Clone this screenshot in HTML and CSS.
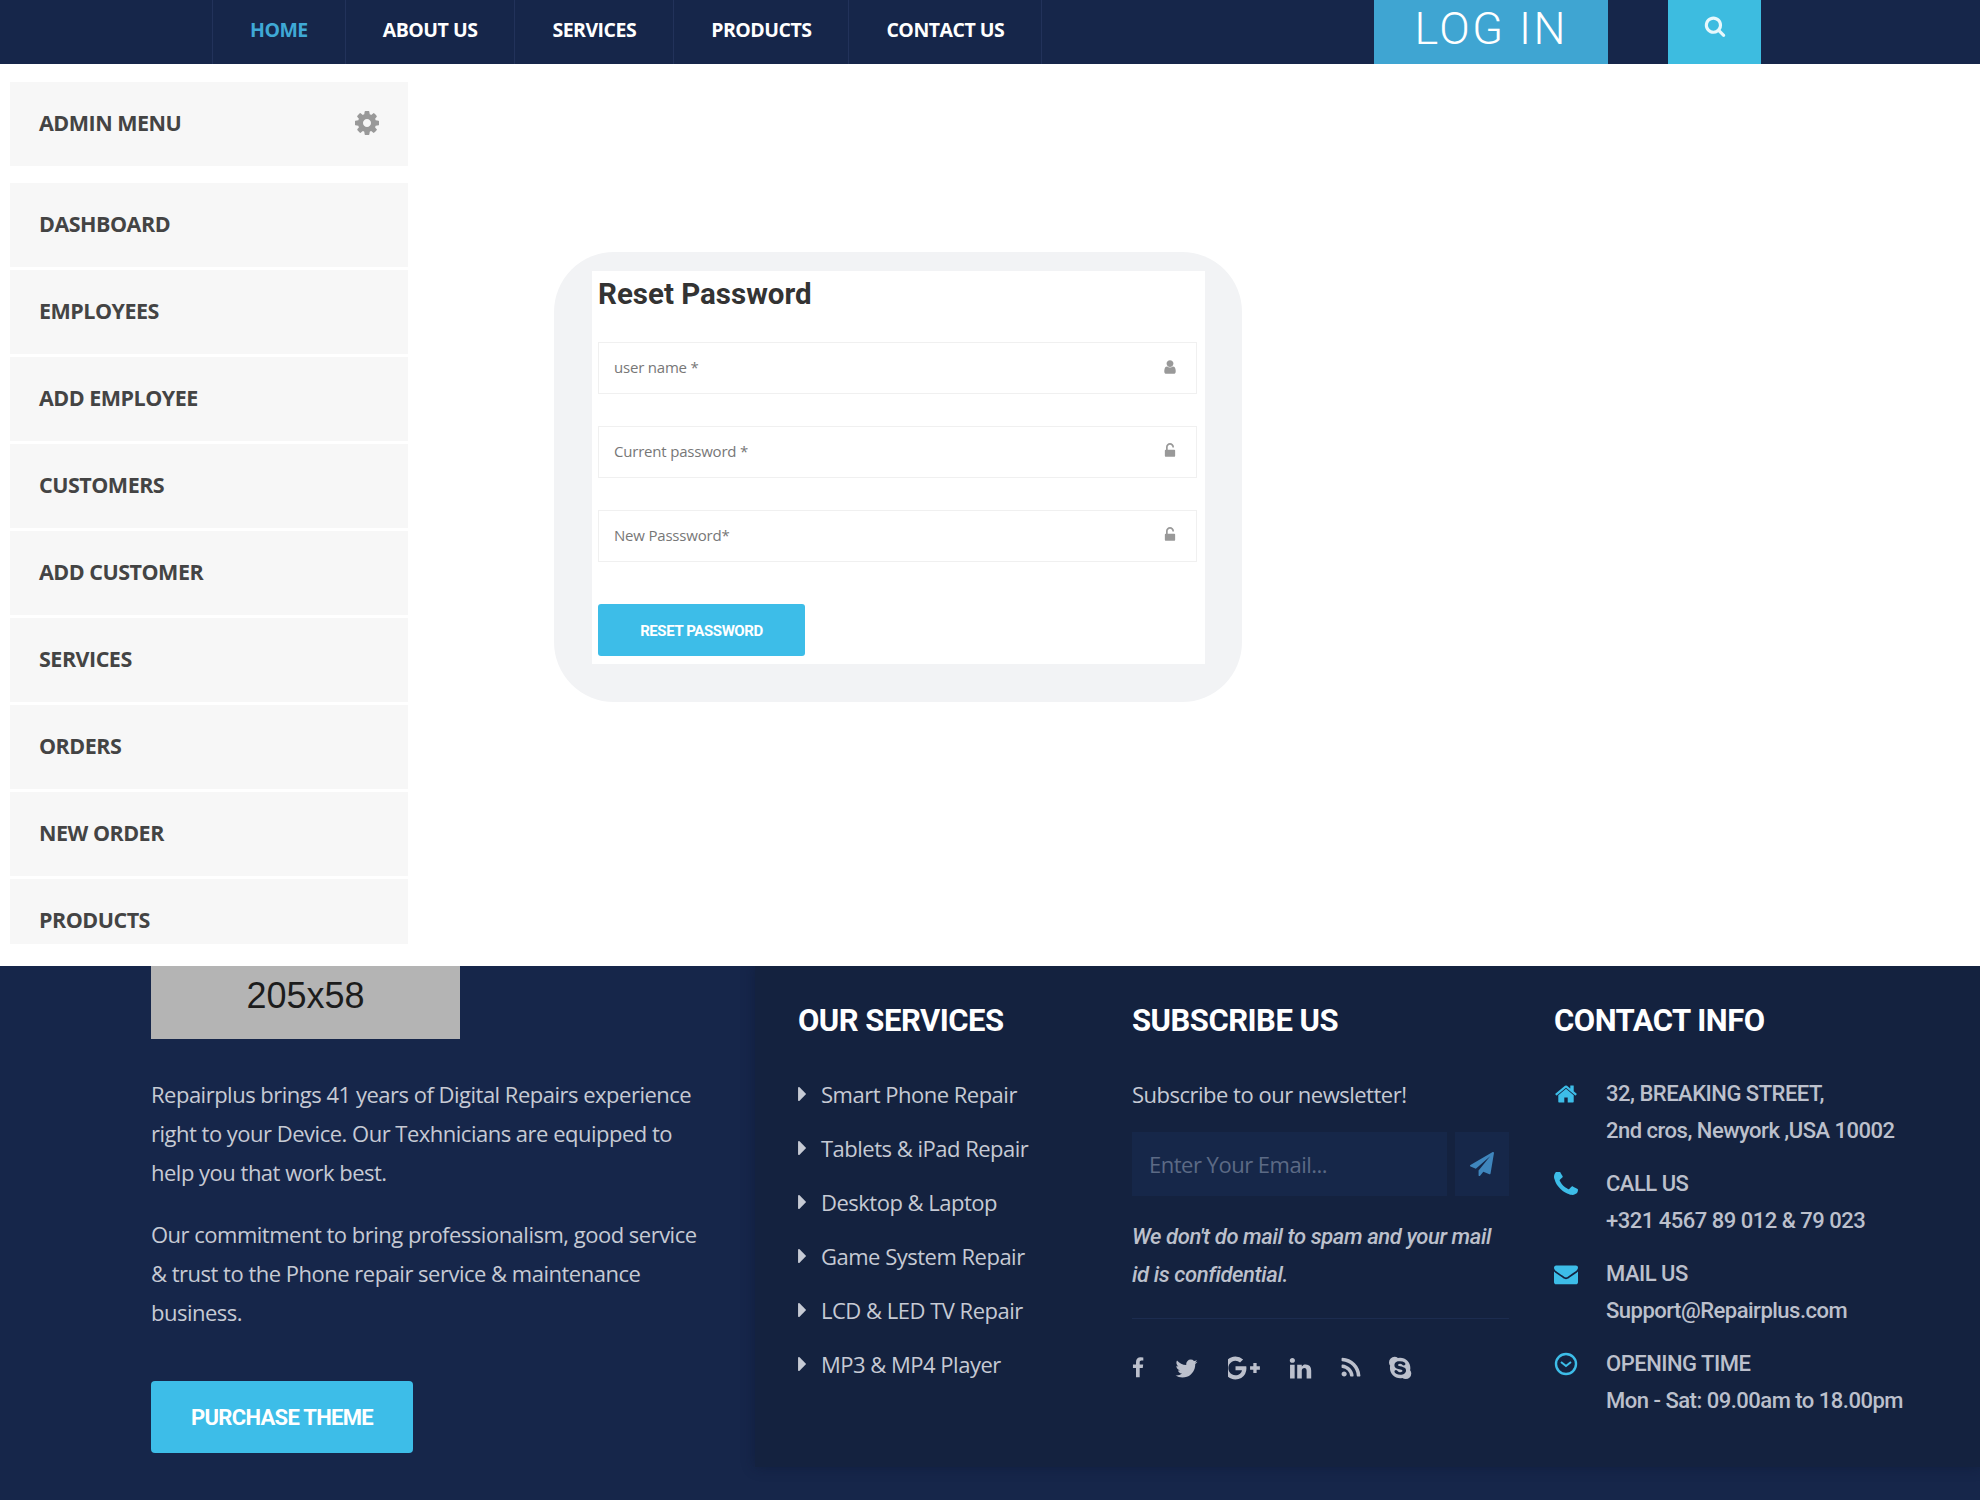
FILE: index.html
```html
<!DOCTYPE html>
<html lang="en">
<head>
  <meta charset="UTF-8" />
  <meta name="viewport" content="width=device-width, initial-scale=1.0"/>
  <title>Reset Password - Repairplus</title>
  <link rel="stylesheet" href="styles.css">
</head>
<body>
  <svg class="icon-defs" aria-hidden="true">
    <symbol id="i-search" viewBox="0 0 1792 1792"><path d="M1216 832q0-185-131.500-316.500t-316.500-131.500-316.500 131.500-131.500 316.500 131.500 316.500 316.500 131.500 316.500-131.500 131.500-316.500zm512 832q0 52-38 90t-90 38q-54 0-90-38l-343-342q-179 124-399 124-143 0-273.500-55.500t-225-150-150-225-55.500-273.500 55.500-273.500 150-225 225-150 273.500-55.500 273.500 55.500 225 150 150 225 55.500 273.500q0 220-124 399l343 343q37 37 37 90z"/></symbol>
    <symbol id="i-cog" viewBox="0 0 1792 1792"><path d="M1152 896q0-106-75-181t-181-75-181 75-75 181 75 181 181 75 181-75 75-181zm512-109v222q0 12-8 23t-20 13l-185 28q-19 54-39 91 35 50 107 138 10 12 10 25t-9 23q-27 37-99 108t-94 71q-12 0-26-9l-138-108q-44 23-91 38-16 136-29 186-7 28-36 28h-222q-14 0-24.500-8.500t-11.500-21.500l-28-184q-49-16-90-37l-141 107q-10 9-25 9-14 0-25-11-126-114-165-168-7-10-7-23 0-12 8-23 15-21 51-66.500t54-70.500q-27-50-41-99l-183-27q-13-2-21-12.500t-8-23.500v-222q0-12 8-23t19-13l186-28q14-46 39-92-40-57-107-138-10-12-10-24 0-10 9-23 26-36 98.500-107.500t94.500-71.500q13 0 26 10l138 107q44-23 91-38 16-136 29-186 7-28 36-28h222q14 0 24.500 8.500t11.500 21.500l28 184q49 16 90 37l142-107q9-9 24-9 13 0 25 10 129 119 165 170 7 8 7 22 0 12-8 23-15 21-51 66.500t-54 70.500q26 50 41 98l183 28q13 2 21 12.500t8 23.500z"/></symbol>
    <symbol id="i-user" viewBox="0 0 1792 1792"><path d="M1536 1399q0 109-62.500 187t-150.500 78h-854q-88 0-150.500-78t-62.500-187q0-85 8.500-160.500t31.500-152 58.500-131 94-89 134.500-34.500q131 128 313 128t313-128q76 0 134.500 34.500t94 89 58.500 131 31.500 152 8.500 160.500zm-256-887q0 159-112.500 271.500t-271.500 112.500-271.500-112.500-112.500-271.500 112.500-271.500 271.500-112.500 271.500 112.500 112.500 271.500z"/></symbol>
    <symbol id="i-unlock" viewBox="0 0 1792 1792"><path d="M1376 768q40 0 68 28t28 68v576q0 40-28 68t-68 28h-960q-40 0-68-28t-28-68v-576q0-40 28-68t68-28h32v-320q0-185 131.500-316.500t316.500-131.500 316.500 131.500 131.500 316.500q0 26-19 45t-45 19h-64q-26 0-45-19t-19-45q0-106-75-181t-181-75-181 75-75 181v320h736z"/></symbol>
    <symbol id="i-caret" viewBox="576 384 576 1024"><path d="M1152 896q0 26-19 45l-448 448q-19 19-45 19t-45-19-19-45v-896q0-26 19-45t45-19 45 19l448 448q19 19 19 45z"/></symbol>
    <symbol id="i-send" viewBox="0 0 1792 1792"><path d="M1764 11q33 24 27 64l-256 1536q-5 29-32 45-14 8-31 8-11 0-24-5l-453-185-242 295q-18 23-49 23-13 0-22-4-19-7-30.500-23.500t-11.500-36.500v-349l864-1059-1069 925-395-162q-37-14-40-55-2-40 32-59l1664-960q15-9 32-9 20 0 36 11z"/></symbol>
    <symbol id="i-facebook" viewBox="400 0 1000 1792"><path d="M1343 12v264h-157q-86 0-116 36t-30 108v189h293l-39 296h-254v759h-306v-759h-255v-296h255v-218q0-186 104-288.500t277-102.500q147 0 228 12z"/></symbol>
    <symbol id="i-twitter" viewBox="0 0 1792 1792"><path d="M1684 408q-67 98-162 167 1 14 1 42 0 130-38 259.500t-115.500 248.500-184.500 210.500-258 146-323 54.500q-271 0-496-145 35 4 76 4 225 0 401-138-105-2-188-64.500t-114-159.500q33 5 61 5 43 0 85-11-112-23-185.500-111.500t-73.500-205.500v-4q68 38 146 41-66-44-105-115t-39-154q0-88 44-163 121 149 294.500 238.500t371.500 99.500q-8-38-8-74 0-134 94.500-228.500t228.500-94.500q140 0 236 102 109-21 205-78-37 115-142 178 92-10 184-50z"/></symbol>
    <symbol id="i-gplus" viewBox="0 0 2048 1792"><path d="M1181 913q0 208-87 370.500t-248 254-369 91.500q-149 0-285-58t-234-156-156-234-58-285 58-285 156-234 234-156 285-58q286 0 491 192l-199 191q-117-113-292-113-123 0-227.500 62t-165.500 168.500-61 232.500 61 232.500 165.500 168.500 227.500 62q83 0 152.500-23t114.500-57.500 78.500-78.500 49-83 21.500-74h-412v-252h686q12 63 12 122zm859-122v210h-209v209h-210v-209h-209v-210h209v-209h210v209h209z"/></symbol>
    <symbol id="i-linkedin" viewBox="0 0 1792 1792"><path d="M477 625v991h-330v-991h330zm21-306q1 73-50.500 122t-135.500 49h-2q-82 0-132-49t-50-122q0-74 51.500-122.500t134.500-48.500 133 48.500 51 122.500zm1166 729v568h-329v-530q0-105-40.500-164.500t-126.500-59.500q-63 0-105.500 34.500t-63.500 85.500q-11 30-11 81v553h-329q2-399 2-647t-1-296l-1-48h329v144h-2q20-32 41-56t56.500-52 87-43.500 114.500-15.500q171 0 275 113.500t104 332.500z"/></symbol>
    <symbol id="i-rss" viewBox="0 0 1792 1792"><path d="M576 1344q0 80-56 136t-136 56-136-56-56-136 56-136 136-56 136 56 56 136zm512 123q2 28-17 48-18 21-47 21h-135q-25 0-43-16.500t-20-41.500q-22-229-184.500-391.500t-391.500-184.500q-25-2-41.500-20t-16.500-43v-135q0-29 21-47 17-17 43-17h5q160 13 306 80.500t259 181.500q114 113 181.500 259t80.500 306zm512 2q2 27-18 47-18 20-46 20h-143q-26 0-44.500-17.500t-19.500-42.500q-12-215-101-408.500t-231.500-336-336-231.500-408.500-102q-25-1-42.500-19.500t-17.500-43.500v-143q0-28 20-46 18-18 44-18h3q262 13 501.500 120t425.500 294q187 186 294 425.500t120 501.500z"/></symbol>
    <symbol id="i-skype" viewBox="0 0 1792 1792"><path d="M1173 1063q0-50-19.500-91.500t-48.500-68.500-73-49-82.500-34-87.500-23l-104-24q-30-7-44-10.500t-35-11.500-30-16-16.500-21-7.500-30q0-77 144-77 43 0 77 12t54 28.500 38 33.500 40 29 48 12q47 0 75.500-32t28.500-77q0-55-56-99.500t-142-67.500-182-23q-68 0-132 15.500t-119.500 47-89 87-33.500 128.500q0 61 19 106.500t56 75.500 80 48.500 103 32.500l146 36q90 22 112 36 32 20 32 60 0 39-40 64.500t-105 25.500q-51 0-91.500-16t-65-38.500-45.500-45-46-38.500-54-16q-50 0-75.500 30t-25.500 75q0 92 122 157.500t291 65.500q73 0 140-18.500t122.500-53.500 88.500-93.500 33-131.500zm363 215q0 159-112.500 271.500t-271.500 112.500q-130 0-234-80-77 16-150 16-143 0-273.500-55.500t-225-150-150-225-55.500-273.500q0-73 16-150-80-104-80-234 0-159 112.500-271.500t271.500-112.500q130 0 234 80 77-16 150-16 143 0 273.500 55.500t225 150 150 225 55.500 273.500q0 73-16 150 80 104 80 234z"/></symbol>
    <symbol id="i-home" viewBox="0 0 1792 1792"><path d="M1472 992v480q0 26-19 45t-45 19h-384v-384h-256v384h-384q-26 0-45-19t-19-45v-480q0-1 .5-3t.5-3l575-474 575 474q1 2 1 6zm223-69l-62 74q-8 9-21 11h-3q-13 0-21-7l-692-577-692 577q-12 8-24 7-13-2-21-11l-62-74q-8-10-7-23.500t11-21.500l719-599q32-26 76-26t76 26l244 204v-195q0-14 9-23t23-9h192q14 0 23 9t9 23v408l219 182q10 8 11 21.500t-7 23.500z"/></symbol>
    <symbol id="i-phone" viewBox="192 192 1408 1408"><path d="M1600 1240q0 27-10 70.500t-21 68.500q-21 50-122 106-94 51-186 51-27 0-53-3.500t-57.500-12.500-47-14.500-55.500-20.500-49-18q-98-35-175-83-127-79-264-216t-216-264q-48-77-83-175-3-9-18-49t-20.500-55.500-14.500-47-12.500-57.500-3.500-53q0-92 51-186 56-101 106-122 25-11 68.500-21t70.500-10q14 0 21 3 18 6 53 76 11 19 30 54t35 63.500 31 53.500q3 4 17.500 25t21.500 35.500 7 28.500q0 20-28.500 50t-62 55-62 53-28.500 46q0 9 5 22.500t8.500 20.500 14 24 11.500 19q76 137 174 235t235 174q2 1 19 11.500t24 14 20.500 8.500 22.500 5q18 0 46-28.500t53-62 55-62 50-28.500q14 0 28.500 7t35.500 21.500 25 17.500q25 15 53.500 31t63.500 35 54 30q70 35 76 53 3 7 3 21z"/></symbol>
    <symbol id="i-mail" viewBox="0 128 1792 1536"><path d="M1792 710v794q0 66-47 113t-113 47h-1472q-66 0-113-47t-47-113v-794q44 49 101 87 362 246 497 345 57 42 92.500 65.500t94.500 48 110 24.500h2q51 0 110-24.500t94.500-48 92.500-65.500q170-123 498-345 57-39 100-87zm0-294q0 79-49 151t-122 123q-376 261-468 325-10 7-42.500 30.500t-54 38-52 32.500-57.500 27-50 9h-2q-23 0-50-9t-57.500-27-52-32.500-54-38-42.500-30.500q-91-64-262-182.500t-205-142.500q-62-42-117-115.500t-55-136.500q0-78 41.500-130t118.500-52h1472q65 0 112.500 47t47.500 113z"/></symbol>
    <symbol id="i-clock" viewBox="0 0 24 24"><circle cx="12" cy="12" r="10" fill="none" stroke="currentColor" stroke-width="2.400"/><path d="M7 10l5 4 5-4" fill="none" stroke="currentColor" stroke-width="2"/></symbol>
  </svg>

  <header class="topbar">
    <nav class="main-nav">
      <a class="active" href="#">HOME</a>
      <a href="#">ABOUT US</a>
      <a href="#">SERVICES</a>
      <a href="#">PRODUCTS</a>
      <a href="#">CONTACT US</a>
    </nav>
    <a class="login-btn" href="#">LOG IN</a>
    <a class="search-btn" href="#"><svg class="icon"><use href="#i-search"/></svg></a>
  </header>

  <main class="page">
    <aside class="sidebar">
      <div class="admin-head">
        <span>ADMIN MENU</span>
        <svg class="icon"><use href="#i-cog"/></svg>
      </div>
      <ul class="admin-menu">
        <li>DASHBOARD</li>
        <li>EMPLOYEES</li>
        <li>ADD EMPLOYEE</li>
        <li>CUSTOMERS</li>
        <li>ADD CUSTOMER</li>
        <li>SERVICES</li>
        <li>ORDERS</li>
        <li>NEW ORDER</li>
        <li>PRODUCTS</li>
      </ul>
    </aside>

    <section class="reset-wrap">
      <form class="reset-form">
        <h2>Reset Password</h2>
        <label class="field">
          <input type="text" placeholder="user name *" />
          <svg class="icon"><use href="#i-user"/></svg>
        </label>
        <label class="field">
          <input type="password" placeholder="Current password *" />
          <svg class="icon"><use href="#i-unlock"/></svg>
        </label>
        <label class="field">
          <input type="password" placeholder="New Passsword*" />
          <svg class="icon"><use href="#i-unlock"/></svg>
        </label>
        <button class="reset-btn" type="button">RESET PASSWORD</button>
      </form>
    </section>
  </main>

  <footer class="footer">
    <div class="footer-about">
      <div class="logo-box">205x58</div>
      <p>Repairplus brings 41 years of Digital Repairs experience right to your Device. Our Texhnicians are equipped to help you that work best.</p>
      <p>Our commitment to bring professionalism, good service &amp; trust to the Phone repair service &amp; maintenance business.</p>
      <a class="purchase-btn" href="#">PURCHASE THEME</a>
    </div>
    <div class="footer-panel">
      <div class="footer-col services-col">
        <h3>OUR SERVICES</h3>
        <ul class="service-list">
          <li><svg class="icon"><use href="#i-caret"/></svg>Smart Phone Repair</li>
          <li><svg class="icon"><use href="#i-caret"/></svg>Tablets &amp; iPad Repair</li>
          <li><svg class="icon"><use href="#i-caret"/></svg>Desktop &amp; Laptop</li>
          <li><svg class="icon"><use href="#i-caret"/></svg>Game System Repair</li>
          <li><svg class="icon"><use href="#i-caret"/></svg>LCD &amp; LED TV Repair</li>
          <li><svg class="icon"><use href="#i-caret"/></svg>MP3 &amp; MP4 Player</li>
        </ul>
      </div>
      <div class="footer-col subscribe-col">
        <h3>SUBSCRIBE US</h3>
        <p class="sub-text">Subscribe to our newsletter!</p>
        <div class="sub-form">
          <input type="text" placeholder="Enter Your Email..." />
          <button type="button"><svg class="icon"><use href="#i-send"/></svg></button>
        </div>
        <p class="sub-note">We don't do mail to spam and your mail id is confidential.</p>
        <div class="socials">
          <svg class="icon s-fb"><use href="#i-facebook"/></svg>
          <svg class="icon s-tw"><use href="#i-twitter"/></svg>
          <svg class="icon s-gp"><use href="#i-gplus"/></svg>
          <svg class="icon s-in"><use href="#i-linkedin"/></svg>
          <svg class="icon s-rs"><use href="#i-rss"/></svg>
          <svg class="icon s-sk"><use href="#i-skype"/></svg>
        </div>
      </div>
      <div class="footer-col contact-col">
        <h3>CONTACT INFO</h3>
        <div class="contact-row">
          <svg class="icon"><use href="#i-home"/></svg>
          <div>32, BREAKING STREET,<br>2nd cros, Newyork ,USA 10002</div>
        </div>
        <div class="contact-row">
          <svg class="icon"><use href="#i-phone"/></svg>
          <div>CALL US<br>+321 4567 89 012 &amp; 79 023</div>
        </div>
        <div class="contact-row">
          <svg class="icon"><use href="#i-mail"/></svg>
          <div>MAIL US<br>Support@Repairplus.com</div>
        </div>
        <div class="contact-row">
          <svg class="icon"><use href="#i-clock"/></svg>
          <div>OPENING TIME<br>Mon - Sat: 09.00am to 18.00pm</div>
        </div>
      </div>
    </div>
  </footer>
</body>
</html>
```

FILE: styles.css
```css
* {
  box-sizing: border-box;
}

html,
body {
  height: 1500px;
  overflow: hidden;
}

body {
  margin: 0;
  background-color: #fff;
  color: #444;
  font-family: 'Open Sans', sans-serif;
}

ul {
  list-style: none;
  margin: 0;
  padding: 0;
}

a {
  text-decoration: none;
}

.icon {
  display: block;
  fill: currentColor;
}

.icon-defs {
  display: none;
}

/* top bar */
.topbar {
  display: flex;
  height: 64px;
  padding-left: 212px;
  background-color: #16264a;
}

.main-nav {
  display: flex;
  border-left: 1px solid #22325a;
}

.main-nav a {
  display: flex;
  align-items: center;
  height: 64px;
  padding: 0 37px 6px;
  border-right: 1px solid #22325a;
  color: #fff;
  font-size: 19.500px;
  font-weight: 700;
  letter-spacing: -0.5px;
}

.main-nav a.active {
  color: #3fa9d6;
}

.login-btn {
  display: flex;
  align-items: center;
  justify-content: center;
  width: 234px;
  margin-left: 332px;
  padding-bottom: 7px;
  background-color: #3fa5d2;
  color: #fff;
  font-family: Roboto, sans-serif;
  font-size: 45px;
  font-weight: 300;
  letter-spacing: 2.500px;
}

.search-btn {
  display: flex;
  justify-content: center;
  width: 93px;
  margin-left: 60px;
  padding-top: 15px;
  background-color: #3dbce0;
  color: #e8f8fc;
}

.search-btn .icon {
  width: 22px;
  height: 22px;
}

/* page body */
.page {
  display: flex;
  height: 902px;
}

.sidebar {
  display: flex;
  flex-direction: column;
  width: 398px;
  height: 862px;
  margin: 18px 0 0 10px;
  overflow: hidden;
  flex-shrink: 0;
}

.admin-head {
  display: flex;
  align-items: center;
  justify-content: space-between;
  height: 84px;
  flex-shrink: 0;
  margin-bottom: 17px;
  padding: 0 27px 3px 29px;
  background-color: #f7f7f7;
  font-size: 21.500px;
  font-weight: 700;
  letter-spacing: -0.5px;
}

.admin-head .icon {
  width: 28px;
  height: 28px;
  color: #999;
}

.admin-menu li {
  display: flex;
  align-items: center;
  height: 84px;
  margin-bottom: 3px;
  padding: 0 0 3px 29px;
  background-color: #f7f7f7;
  font-size: 21.500px;
  font-weight: 700;
  letter-spacing: -0.5px;
}

.reset-wrap {
  width: 688px;
  height: 450px;
  margin: 188px 0 0 146px;
  padding: 19px 37px 38px 38px;
  border-radius: 60px;
  background-color: #f2f3f5;
}

.reset-form {
  height: 393px;
  padding: 0 8px 0 6px;
  background-color: #fff;
}

.reset-form h2 {
  margin: 0;
  padding-top: 4px;
  height: 71px;
  color: #333;
  font-family: Roboto, sans-serif;
  font-size: 29.500px;
  font-weight: 700;
  line-height: 38px;
}

.field {
  display: flex;
  align-items: center;
  height: 52px;
  margin-bottom: 32px;
  border: 1px solid #f0f0f0;
  padding: 0 18px 0 15px;
}

.field input {
  flex: 1;
  padding: 0 0 2px;
  border: none;
  outline: none;
  background: none;
  font-family: 'Open Sans', sans-serif;
  font-size: 15px;
  letter-spacing: -0.2px;
}

.field input::placeholder {
  color: #777;
}

.field .icon {
  width: 16px;
  height: 16px;
  margin-top: -3px;
  color: #999;
}

.reset-btn {
  display: block;
  width: 207px;
  height: 52px;
  margin-top: 42px;
  padding-top: 2px;
  border: none;
  border-radius: 3px;
  background-color: #3dbde8;
  color: #fff;
  font-family: Roboto, sans-serif;
  font-size: 15px;
  font-weight: 700;
  letter-spacing: -0.4px;
}

/* footer */
.footer {
  display: flex;
  height: 534px;
  padding-left: 151px;
  overflow: hidden;
  background-color: #16264a;
  color: #c6cad4;
}

.footer-about {
  width: 604px;
  flex-shrink: 0;
}

.logo-box {
  display: flex;
  align-items: center;
  justify-content: center;
  width: 309px;
  height: 73px;
  margin-bottom: 36px;
  padding-bottom: 13px;
  background-color: #b4b4b4;
  color: #1c1c1c;
  font-family: 'Liberation Sans', sans-serif;
  font-size: 36px;
}

.footer-about p {
  width: 560px;
  margin: 0 0 23px;
  font-size: 22px;
  line-height: 39px;
  letter-spacing: -0.5px;
}

.purchase-btn {
  display: flex;
  align-items: center;
  justify-content: center;
  width: 262px;
  height: 72px;
  margin-top: 49px;
  border-radius: 4px;
  background-color: #3dbde8;
  color: #fff;
  font-family: Roboto, sans-serif;
  font-size: 22px;
  font-weight: 700;
  letter-spacing: -0.7px;
}

.footer-panel {
  display: flex;
  flex: 1;
  height: 501px;
  padding-left: 43px;
  background-color: #14223f;
  box-shadow: 0 0 12px rgba(10, 20, 45, 0.4);
}

.footer-col h3 {
  margin: 0;
  padding-top: 35px;
  height: 100px;
  color: #fff;
  font-family: Roboto, sans-serif;
  font-size: 31px;
  font-weight: 700;
  line-height: 40px;
  letter-spacing: -0.5px;
}

.services-col {
  width: 334px;
}

.service-list {
  padding-top: 1px;
}

.service-list li {
  display: flex;
  align-items: center;
  height: 54px;
  font-size: 22px;
  letter-spacing: -0.5px;
}

.service-list .icon {
  width: 8px;
  height: 14px;
  margin-right: 15px;
}

.subscribe-col {
  width: 422px;
  padding-right: 45px;
}

.sub-text {
  margin: 0;
  height: 66px;
  padding-top: 14px;
  font-size: 22px;
  line-height: 28px;
  letter-spacing: -0.5px;
}

.sub-form {
  display: flex;
  gap: 8px;
  height: 64px;
}

.sub-form input {
  width: 315px;
  border: none;
  outline: none;
  padding: 0 17px;
  background-color: #162749;
  color: #fff;
  font-family: 'Open Sans', sans-serif;
  font-size: 22px;
  letter-spacing: -0.5px;
}

.sub-form input::placeholder {
  color: #5c6a85;
}

.sub-form button {
  display: flex;
  align-items: center;
  justify-content: center;
  width: 55px;
  padding: 0;
  border: none;
  background-color: #162749;
  color: #3f86bd;
}

.sub-form .icon {
  width: 24px;
  height: 24px;
}

.sub-note {
  margin: 22px 0 0;
  height: 101px;
  padding-right: 6px;
  border-bottom: 1px solid #1c2c50;
  color: #bcc0cc;
  font-family: Roboto, sans-serif;
  font-size: 22px;
  font-style: italic;
  font-weight: 500;
  line-height: 38px;
  letter-spacing: -0.4px;
}

.socials {
  display: flex;
  align-items: center;
  height: 60px;
  margin-top: 19px;
  color: #bcc0cc;
}

.s-fb { width: 12px; height: 22px; margin-right: 30px; }
.s-tw { width: 25px; height: 25px; margin-right: 29px; }
.s-gp { width: 32px; height: 28px; margin-right: 28px; }
.s-in { width: 25px; height: 25px; margin-right: 26px; }
.s-rs { width: 24px; height: 24px; margin-right: 26px; }
.s-sk { width: 26px; height: 26px; }

.contact-col h3 {
  height: 110px;
}

.contact-col .contact-row {
  display: flex;
  height: 90px;
  color: #bcc0cc;
  font-family: Roboto, sans-serif;
  font-size: 22px;
  font-weight: 500;
  line-height: 36.500px;
  letter-spacing: -0.5px;
}

.contact-row .icon {
  width: 24px;
  height: 24px;
  margin: 6px 28px 0 0;
  color: #3dbde8;
}
```
